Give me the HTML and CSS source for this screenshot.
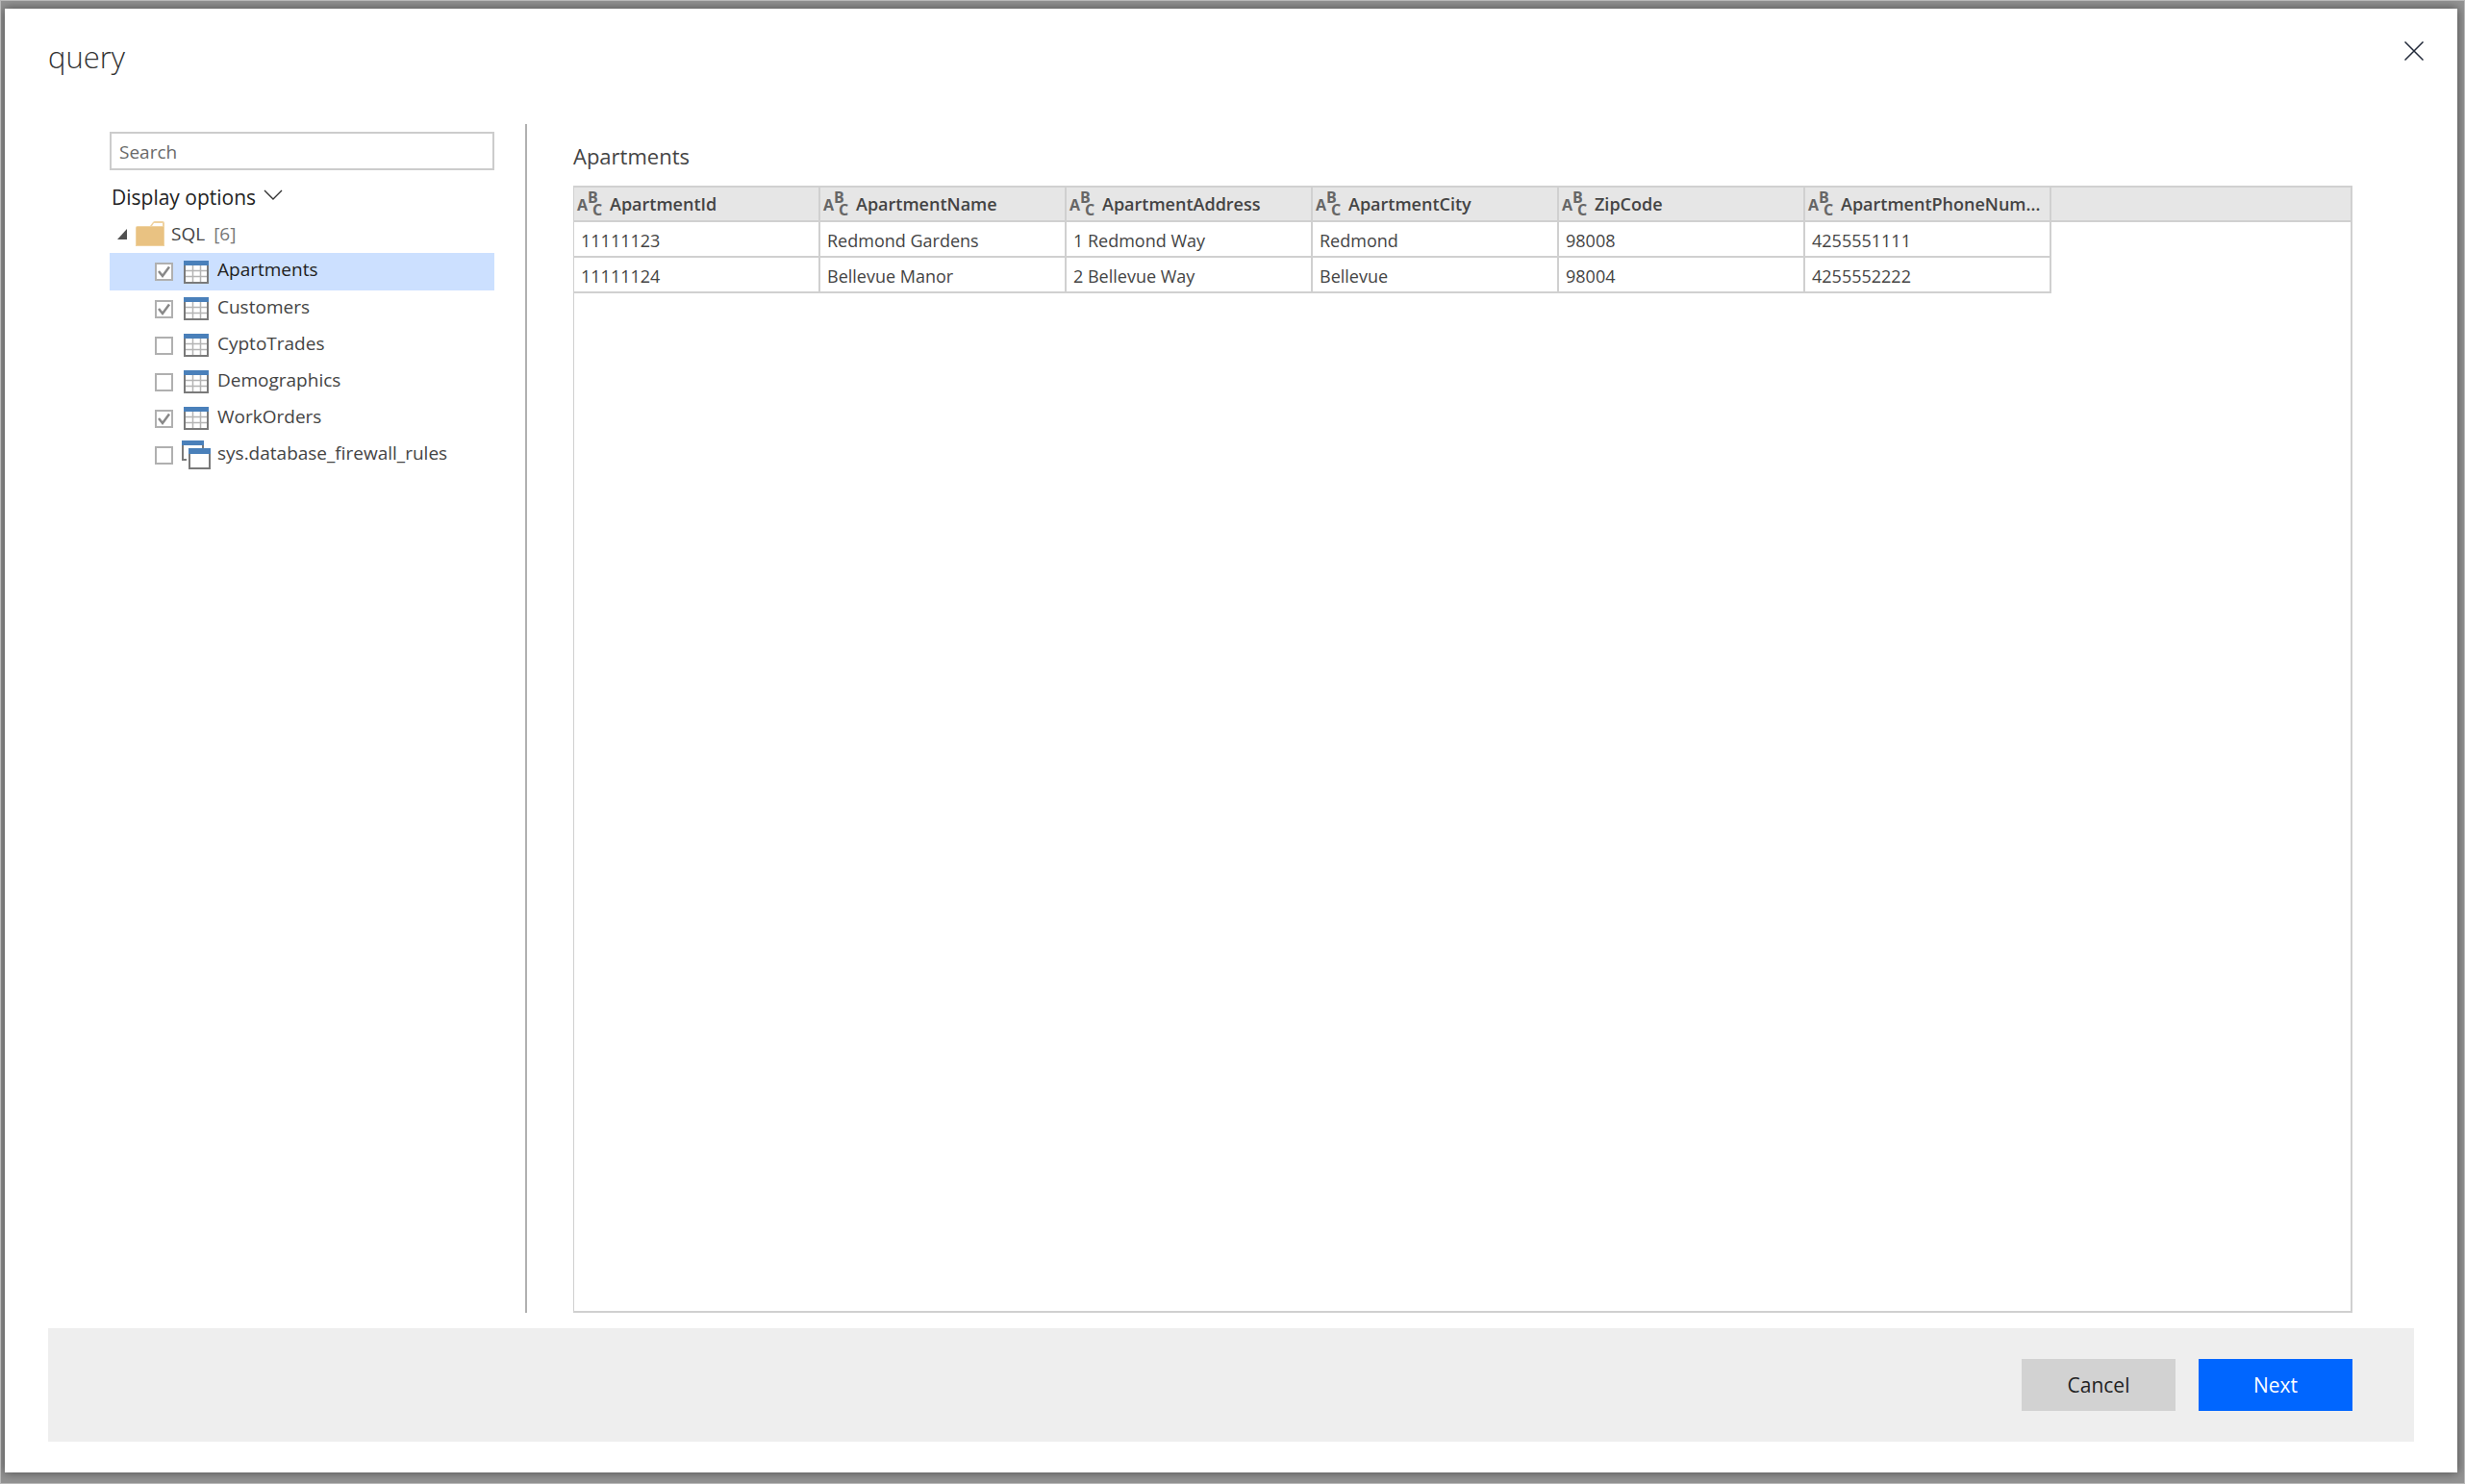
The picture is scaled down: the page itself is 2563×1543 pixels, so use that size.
FILE: index.html
```html
<!DOCTYPE html>
<html lang="en">
<head>
    <meta charset="UTF-8">
    <meta name="viewport" content="width=device-width, initial-scale=1.0">
    <title>query</title>
    <link rel="stylesheet" href="styles.css">
</head>
<body>
    <!-- shared icons -->
    <svg class="sprite" aria-hidden="true">
        <symbol id="icon-table" viewBox="0 0 26 24">
            <rect x="1" y="1" width="24" height="22" fill="#fff"/>
            <path d="M9.5 5v17M17.5 5v17M2 10.5h22M2 16.5h22" fill="none" stroke="#b4b4b4" stroke-width="1.5"/>
            <path d="M1 4v19h24V4" fill="none" stroke="#7a7a7a" stroke-width="2"/>
            <rect width="26" height="5" fill="#4a80ba"/>
        </symbol>
        <symbol id="icon-view" viewBox="0 0 30 30">
            <path d="M1 5v15h4M22 5v3" fill="none" stroke="#7a7a7a" stroke-width="2"/>
            <rect width="23" height="5" fill="#4a80ba"/>
            <rect x="8" y="9" width="21" height="20" fill="#fff" stroke="#7a7a7a" stroke-width="2"/>
            <rect x="7" y="8" width="23" height="6" fill="#4a80ba"/>
        </symbol>
    </svg>

    <main class="dialog">
        <header class="dialog-header">
            <h1>query</h1>
            <button type="button" class="close" aria-label="Close">
                <svg width="20" height="20" viewBox="0 0 20 20"><path d="M.5 .5l19 19M19.5 .5l-19 19" fill="none" stroke="#222a3a" stroke-width="1.5"/></svg>
            </button>
        </header>

        <div class="content">
            <aside class="navigator">
                <input type="text" class="search" placeholder="Search" aria-label="Search">
                <button type="button" class="display-options">
                    Display options
                    <svg width="20" height="12" viewBox="0 0 20 12"><path d="M1 1l9 9 9-9" fill="none" stroke="#333" stroke-width="1.4"/></svg>
                </button>
                <div class="folder">
                    <svg width="10" height="11" viewBox="0 0 10 11"><path d="M10 0v11H0z" fill="#505050"/></svg>
                    <svg class="folder-icon" width="30" height="26" viewBox="0 0 30 26">
                        <path d="M0 7q0-2 2-2h13l3-4q1-1 2-1h8q2 0 2 2v24H0z" fill="#efd2a0"/>
                        <path d="M17 5l2-3h9v3z" fill="#fff"/>
                        <path d="M1 6h28v19H1z" fill="#e9c282"/>
                    </svg>
                    <span>SQL</span>
                    <span class="count">[6]</span>
                </div>
                <ul class="tables">
                    <li class="selected"><label><input type="checkbox" checked><svg class="icon"><use href="#icon-table"/></svg><span>Apartments</span></label></li>
                    <li><label><input type="checkbox" checked><svg class="icon"><use href="#icon-table"/></svg><span>Customers</span></label></li>
                    <li><label><input type="checkbox"><svg class="icon"><use href="#icon-table"/></svg><span>CyptoTrades</span></label></li>
                    <li><label><input type="checkbox"><svg class="icon"><use href="#icon-table"/></svg><span>Demographics</span></label></li>
                    <li><label><input type="checkbox" checked><svg class="icon"><use href="#icon-table"/></svg><span>WorkOrders</span></label></li>
                    <li><label><input type="checkbox"><svg class="icon view"><use href="#icon-view"/></svg><span>sys.database_firewall_rules</span></label></li>
                </ul>
            </aside>

            <section class="preview">
                <h2>Apartments</h2>
                <div class="grid">
                    <table>
                        <thead>
                            <tr>
                                <th><div><svg class="abc" viewBox="0 0 26 26" aria-hidden="true"><text x="0" y="20">A</text><text x="11" y="12">B</text><text x="16" y="25">C</text></svg><span>ApartmentId</span></div></th>
                                <th><div><svg class="abc" viewBox="0 0 26 26" aria-hidden="true"><text x="0" y="20">A</text><text x="11" y="12">B</text><text x="16" y="25">C</text></svg><span>ApartmentName</span></div></th>
                                <th><div><svg class="abc" viewBox="0 0 26 26" aria-hidden="true"><text x="0" y="20">A</text><text x="11" y="12">B</text><text x="16" y="25">C</text></svg><span>ApartmentAddress</span></div></th>
                                <th><div><svg class="abc" viewBox="0 0 26 26" aria-hidden="true"><text x="0" y="20">A</text><text x="11" y="12">B</text><text x="16" y="25">C</text></svg><span>ApartmentCity</span></div></th>
                                <th><div><svg class="abc" viewBox="0 0 26 26" aria-hidden="true"><text x="0" y="20">A</text><text x="11" y="12">B</text><text x="16" y="25">C</text></svg><span>ZipCode</span></div></th>
                                <th><div><svg class="abc" viewBox="0 0 26 26" aria-hidden="true"><text x="0" y="20">A</text><text x="11" y="12">B</text><text x="16" y="25">C</text></svg><span>ApartmentPhoneNum...</span></div></th>
                                <th class="rest"></th>
                            </tr>
                        </thead>
                        <tbody>
                            <tr>
                                <td>11111123</td>
                                <td>Redmond Gardens</td>
                                <td>1 Redmond Way</td>
                                <td>Redmond</td>
                                <td>98008</td>
                                <td>4255551111</td>
                            </tr>
                            <tr>
                                <td>11111124</td>
                                <td>Bellevue Manor</td>
                                <td>2 Bellevue Way</td>
                                <td>Bellevue</td>
                                <td>98004</td>
                                <td>4255552222</td>
                            </tr>
                        </tbody>
                    </table>
                </div>
            </section>
        </div>

        <footer class="actions">
            <button type="button">Cancel</button>
            <button type="button" class="primary">Next</button>
        </footer>
    </main>
</body>
</html>
```

FILE: styles.css
```css
* {
    box-sizing: border-box;
}
body {
    margin: 0;
    height: 100vh;
    padding: 8px 7px 11px 4px;
    border: 1px solid #b8b8b8;
    background-color: #939393;
    color: #444;
    font-family: "Open Sans", "Noto Sans", sans-serif;
    font-size: 19px;
    display: flex;
}
h1, h2, ul {
    margin: 0;
    padding: 0;
}
button {
    border: 0;
    padding: 0;
    font-family: inherit;
    cursor: pointer;
}
svg {
    display: block;
    flex: none;
}
.sprite {
    position: absolute;
    width: 0;
    height: 0;
}
.dialog {
    flex: 1;
    min-width: 0;
    display: flex;
    flex-direction: column;
    padding: 24px 45px 32px;
    background-color: #fff;
    box-shadow: 0 0 10px rgba(0, 0, 0, 0.5);
}

/* Header */
.dialog-header {
    display: flex;
    justify-content: space-between;
    align-items: flex-start;
    height: 96px;
}
h1 {
    font-size: 31px;
    font-weight: 300;
    line-height: 52px;
    color: #333;
}
.close {
    width: 40px;
    height: 40px;
    margin-right: -20px;
    background: none;
    display: flex;
    align-items: center;
    justify-content: center;
}

/* Left pane */
.content {
    flex: 1;
    min-height: 0;
    display: flex;
    padding: 0 64px;
}
.navigator {
    width: 434px;
    flex: none;
    padding: 8px 32px 0 0;
    border-right: 2px solid #b0b0b0;
}
.search {
    display: block;
    width: 100%;
    height: 40px;
    padding: 2px 8px 0;
    border: 2px solid #ccc;
    font: inherit;
}
.search::placeholder {
    color: #6a6a6a;
    opacity: 1;
}
.display-options {
    display: flex;
    align-items: center;
    gap: 8px;
    height: 50px;
    padding: 6px 2px 0;
    background: none;
    color: #222;
    font-size: 21px;
}
.display-options svg {
    margin-bottom: 4px;
}
.folder {
    display: flex;
    align-items: center;
    height: 36px;
    padding: 0 0 4px 8px;
}
.folder-icon {
    margin: 0 7px 0 9px;
}
.folder span {
    padding-bottom: 1px;
}
.count {
    margin-left: 9px;
    color: #777;
}
.tables {
    list-style: none;
}
.tables label {
    display: flex;
    align-items: center;
    height: 38px;
    padding-left: 47px;
}
.tables .selected label {
    height: 39px;
    background-color: #cce0ff;
    color: #222;
}
.tables input {
    appearance: none;
    width: 19px;
    height: 19px;
    margin: 0 9px 0 0;
    border: 2px solid #b0b0b0;
    background-color: #fff;
}
.tables input:checked {
    background-image: url("data:image/svg+xml,%3Csvg xmlns='http://www.w3.org/2000/svg' viewBox='0 0 15 15'%3E%3Cpath d='M2 7l4 5 7-9.500' fill='none' stroke='%23888' stroke-width='2.500'/%3E%3C/svg%3E");
}
.tables span {
    padding-bottom: 5px;
}
.icon {
    width: 26px;
    height: 24px;
    margin: 0 9px 0 2px;
}
.icon.view {
    width: 30px;
    height: 30px;
    margin: 0 7px 0 0;
}

/* Preview */
.preview {
    flex: 1;
    min-width: 0;
    display: flex;
    flex-direction: column;
    padding-left: 48px;
}
h2 {
    height: 64px;
    font-size: 22px;
    font-weight: 400;
    line-height: 66px;
}
.grid {
    flex: 1;
    border: 2px solid #d0d0d0;
    border-left-width: 1px;
}
table {
    width: 100%;
    table-layout: fixed;
    border-collapse: separate;
    border-spacing: 0;
    font-size: 18px;
}
th, td {
    width: 256px;
    padding: 0 7px;
    border: solid #d0d0d0;
    border-width: 0 2px 2px 0;
    text-align: left;
    white-space: nowrap;
}
td {
    height: 37px;
    padding-top: 2px;
}
th {
    height: 36px;
    padding: 0 3px;
    background-color: #e6e6e6;
    font-weight: 600;
}
th div {
    display: flex;
    align-items: center;
    gap: 8px;
}
.rest {
    width: auto;
    border-right: 0;
}
.abc {
    width: 26px;
    height: 26px;
    overflow: visible;
    fill: #666;
    font-size: 16px;
    font-weight: 700;
}

/* Footer */
.actions {
    display: flex;
    justify-content: flex-end;
    gap: 24px;
    margin-top: 16px;
    padding: 32px 64px;
    background-color: #eee;
}
.actions button {
    width: 160px;
    height: 54px;
    background-color: #d2d2d2;
    color: #222;
    font-size: 21px;
}
.actions .primary {
    background-color: #06f;
    color: #fff;
}
```
